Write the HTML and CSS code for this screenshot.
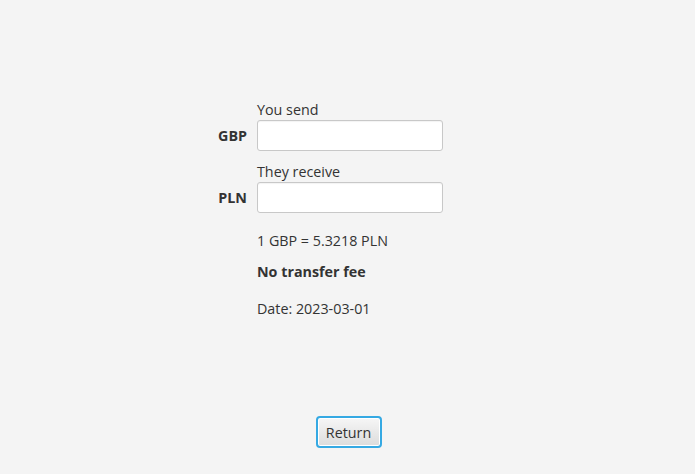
FILE: index.html
```html
<!DOCTYPE html>
<html lang="en">
<head>
    <meta charset="UTF-8">
    <title>Currency converter</title>
    <link rel="stylesheet" href="styles.css">
</head>
<body>
    <div class="page">
        <div class="form">
            <div></div>
            <div class="caption">You send</div>
            <div class="code">GBP</div>
            <input type="text" class="amount">
            <div></div>
            <div class="caption second">They receive</div>
            <div class="code">PLN</div>
            <input type="text" class="amount">
            <div></div>
            <div class="info">
                <p class="rate">1 GBP = 5.3218 PLN</p>
                <p class="fee">No transfer fee</p>
                <p class="date">Date: 2023-03-01</p>
            </div>
        </div>
        <button class="return">Return</button>
    </div>
</body>
</html>
```

FILE: styles.css
```css
body {
    margin: 0;
    background: #f4f4f4;
    font-family: "Open Sans", "Noto Sans", sans-serif;
    font-size: 14.3px;
    color: #333;
}
.page {
    height: 474px;
    display: flex;
    flex-direction: column;
    align-items: center;
    padding-top: 100px;
    box-sizing: border-box;
}
.form {
    display: grid;
    grid-template-columns: 29px 186px;
    column-gap: 10px;
    align-items: center;
    margin-right: 34px;
}
.caption {
    line-height: 18px;
    padding-top: 1px;
    margin-bottom: 1px;
}
.caption.second {
    margin-top: 11px;
}
.code {
    font-weight: bold;
    justify-self: end;
}
.amount {
    height: 31px;
    box-sizing: border-box;
    border: 1px solid #c8c8c8;
    border-radius: 3px;
    background: #fff;
    box-shadow: inset 0 1px 1px rgba(0, 0, 0, 0.05);
    margin: 0;
}
.info p {
    margin: 0;
    line-height: 18px;
}
.rate {
    margin-top: 19px !important;
}
.fee {
    font-weight: bold;
    margin-top: 13px !important;
}
.date {
    margin-top: 19px !important;
}
.return {
    margin-top: auto;
    margin-bottom: 26px;
    margin-left: 2px;
    width: 66px;
    height: 32px;
    font-family: inherit;
    font-size: 14.3px;
    color: #333;
    border: 2px solid #35a9e3;
    border-radius: 4px;
    background: linear-gradient(#f6f6f6, #dcdcdc);
    box-shadow: inset 0 0 0 1px #ffffff;
    padding: 0;
}
```
